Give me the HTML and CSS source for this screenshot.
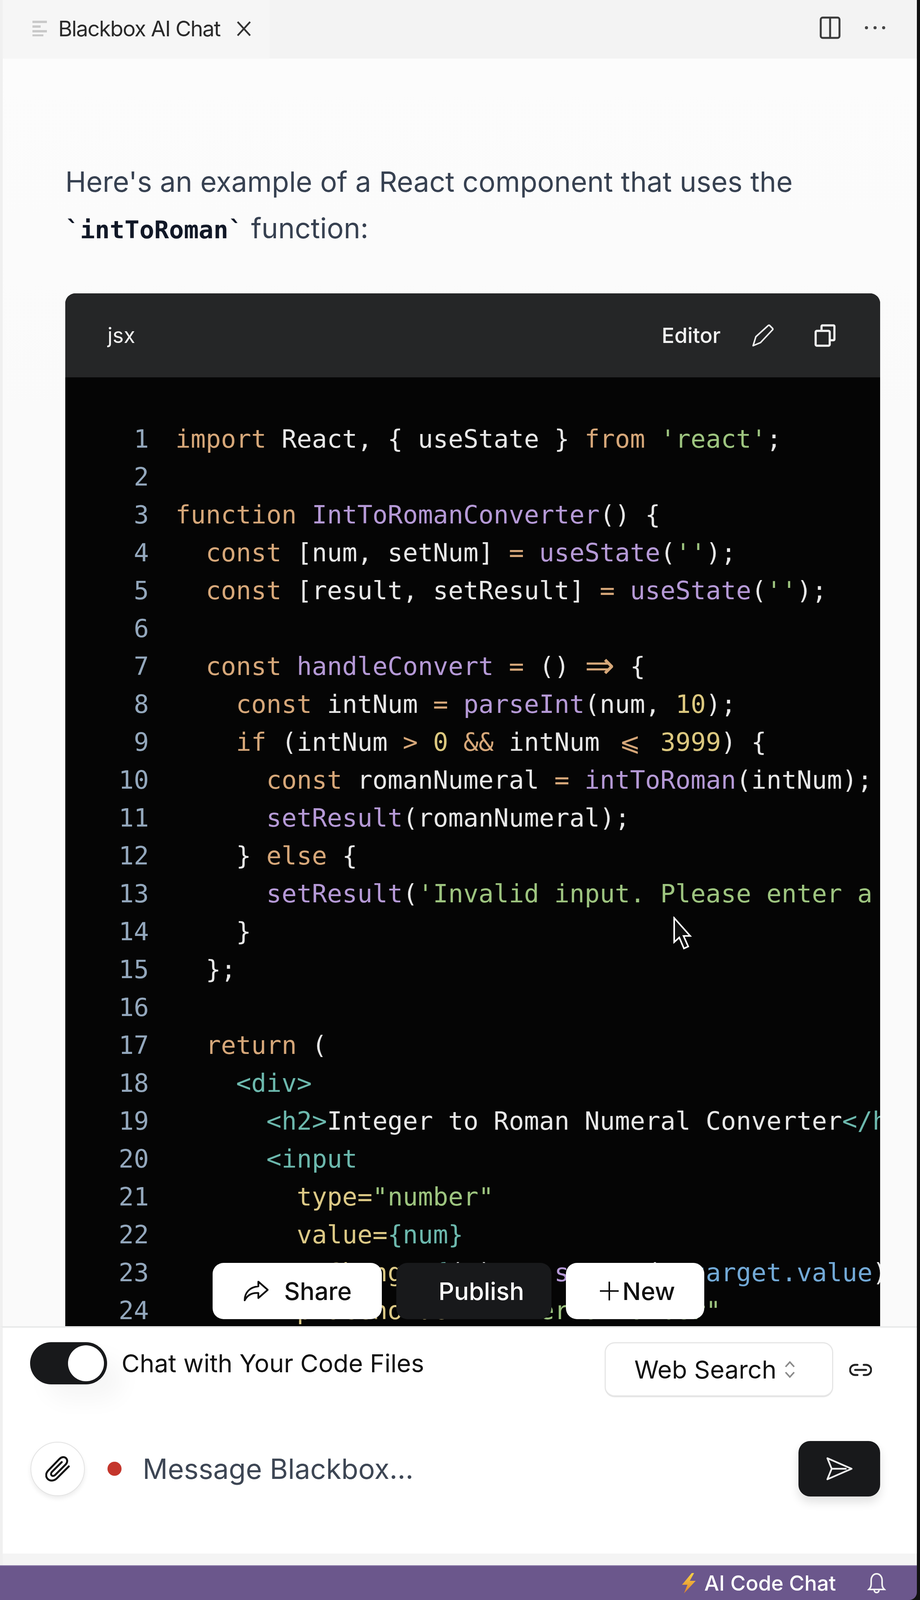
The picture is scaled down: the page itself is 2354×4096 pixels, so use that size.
FILE: index.html
```html
<!DOCTYPE html>
<html lang="en">
<head>
<meta charset="utf-8">
<title>Blackbox AI Chat</title>
<link rel="stylesheet" href="styles.css">
</head>
<body>
<div class="app">
  <header class="tabs">
    <div class="tab">
      <svg class="tab-lines" viewBox="0 0 37 40"><path d="M0 3h37M0 15h21M0 27h37M0 38h28"/></svg>
      <span class="tab-title">Blackbox AI Chat</span>
      <svg class="tab-close" viewBox="0 0 36 39"><path d="M2 2l32 35M34 2L2 37"/></svg>
    </div>
    <div class="tab-actions">
      <svg class="split" viewBox="0 0 54 58"><rect x="3" y="3" width="48" height="52" rx="5"/><path d="M27 3v52"/></svg>
      <svg class="more" viewBox="0 0 54 10"><circle cx="5" cy="5" r="4"/><circle cx="27" cy="5" r="4"/><circle cx="49" cy="5" r="4"/></svg>
    </div>
  </header>

  <main class="content">
    <p class="intro">Here's an example of a React component that uses the<br><code class="inline-code">`intToRoman`</code> function:</p>
    <section class="code-card">
      <div class="code-head">
        <span class="lang">jsx</span>
        <span class="head-actions">
          <span class="editor">Editor</span>
          <svg class="pencil" viewBox="0 0 56 58"><path d="M3 55l7-23L42 3q2-1 3 0l8 8q1 2 0 3L22 47z"/></svg>
          <svg class="copy" viewBox="0 0 54 58"><path d="M18 14V6q0-3 3-3h27q3 0 3 3v32q0 3-3 3h-9"/><rect x="3" y="17" width="36" height="38" rx="3"/></svg>
        </span>
      </div>
      <div class="code-body">
<div class="ln"><i>1</i><b class="k">import</b> React, { useState } <b class="k">from</b> <b class="s">'react'</b>;</div>
<div class="ln"><i>2</i></div>
<div class="ln"><i>3</i><b class="k">function</b> <b class="f">IntToRomanConverter</b>() {</div>
<div class="ln"><i>4</i>  <b class="k">const</b> [num, setNum] <b class="k">=</b> <b class="f">useState</b>(<b class="s">''</b>);</div>
<div class="ln"><i>5</i>  <b class="k">const</b> [result, setResult] <b class="k">=</b> <b class="f">useState</b>(<b class="s">''</b>);</div>
<div class="ln"><i>6</i></div>
<div class="ln"><i>7</i>  <b class="k">const</b> <b class="f">handleConvert</b> <b class="k">=</b> () <b class="k arrow">⇒</b> {</div>
<div class="ln"><i>8</i>    <b class="k">const</b> intNum <b class="k">=</b> <b class="f">parseInt</b>(num, <b class="n">10</b>);</div>
<div class="ln"><i>9</i>    <b class="k">if</b> (intNum <b class="k">&gt;</b> <b class="n">0</b> <b class="k">&amp;&amp;</b> intNum <b class="k lig">⩽</b> <b class="n">3999</b>) {</div>
<div class="ln"><i>10</i>      <b class="k">const</b> romanNumeral <b class="k">=</b> <b class="f">intToRoman</b>(intNum);</div>
<div class="ln"><i>11</i>      <b class="f">setResult</b>(romanNumeral);</div>
<div class="ln"><i>12</i>    } <b class="k">else</b> {</div>
<div class="ln"><i>13</i>      <b class="f">setResult</b>(<b class="s">'Invalid input. Please enter a number between 1 and 3999.'</b>);</div>
<div class="ln"><i>14</i>    }</div>
<div class="ln"><i>15</i>  };</div>
<div class="ln"><i>16</i></div>
<div class="ln"><i>17</i>  <b class="k">return</b> (</div>
<div class="ln"><i>18</i>    <b class="t">&lt;div&gt;</b></div>
<div class="ln"><i>19</i>      <b class="t">&lt;h2&gt;</b>Integer to Roman Numeral Converter<b class="t">&lt;/h2&gt;</b></div>
<div class="ln"><i>20</i>      <b class="t">&lt;input</b></div>
<div class="ln"><i>21</i>        <b class="a">type=</b><b class="s">"number"</b></div>
<div class="ln"><i>22</i>        <b class="a">value=</b><b class="t">{num}</b></div>
<div class="ln"><i>23</i>        <b class="a">onChange=</b><b class="t">{</b>(e) <b class="k arrow">⇒</b> <b class="f">setNum</b>(<b class="u">e.target.value</b>)<b class="t">}</b></div>
<div class="ln"><i>24</i>        <b class="a">placeholder=</b><b class="s">"Enter a number"</b></div>
      </div>
    </section>
    <svg class="cursor" viewBox="0 0 52 86"><path d="M4 4v62l13-12 12 28 11-5-12-27h17z"/></svg>
    <div class="float-actions">
      <button class="pill light share">
        <svg viewBox="0 0 64 52"><path d="M38 2l24 21-24 21V31C22 30 10 36 3 50c0-20 13-34 35-36z"/></svg>
        Share
      </button>
      <button class="pill dark">Publish</button>
      <button class="pill light new">
        <svg viewBox="0 0 48 48"><path d="M24 0v48M0 24h48"/></svg>
        New
      </button>
    </div>
  </main>

  <footer class="composer">
    <div class="composer-top">
      <div class="toggle-row">
        <span class="toggle"><span class="knob"></span></span>
        <span class="toggle-label">Chat with Your Code Files</span>
      </div>
      <div class="search-row">
        <div class="select">
          <span>Web Search</span>
          <svg class="updown" viewBox="0 0 28 44"><path d="M3 15L14 3l11 12M3 29l11 12 11-12"/></svg>
        </div>
        <svg class="link" viewBox="0 0 58 32"><path d="M21 3H15a13 13 0 0 0 0 26h6M37 3h6a13 13 0 0 1 0 26h-6M15 16h28"/></svg>
      </div>
    </div>
    <div class="composer-input">
      <button class="attach">
        <svg viewBox="0 0 64 66"><path d="M60 27L30 57c-8 8-18 8-24 2s-5-15 2-22L36 8c6-6 13-6 17-2s4 11-1 16L25 49c-3 3-7 3-9 1s-2-6 1-9L42 16"/></svg>
      </button>
      <span class="rec"></span>
      <span class="placeholder">Message Blackbox...</span>
      <button class="send">
        <svg viewBox="0 0 68 60"><path d="M3 3l62 27L3 57l11-27zM14 30h38"/></svg>
      </button>
    </div>
  </footer>
  <div class="band"></div>
  <div class="status">
    <svg class="bolt" viewBox="0 0 40 52">
      <defs><linearGradient id="boltFill" x1="0" y1="0" x2="0" y2="1"><stop offset="0" stop-color="#f7d247"/><stop offset="1" stop-color="#e0812a"/></linearGradient></defs>
      <path d="M28 0L3 30h14L8 52l30-32H23l11-20z"/>
    </svg>
    <span class="status-text">AI Code Chat</span>
    <svg class="bell" viewBox="0 0 48 54"><path d="M4 43c4-4 6-7 6-14v-9C10 10 16 3 24 3s14 7 14 17v9c0 7 2 10 6 14zM18 45a6 6 0 0 0 12 0"/></svg>
  </div>
</div>
</body>
</html>
```
FILE: styles.css
```css
* { box-sizing: border-box; }
html, body { margin: 0; padding: 0; width: 2354px; height: 4096px; overflow: hidden; background: #1a1a1a; }
body { font-family: Inter, "Noto Sans", sans-serif; color: #111; }
.app { width: 2354px; height: 4096px; padding-right: 8px; display: flex; flex-direction: column; position: relative; overflow: hidden; background: linear-gradient(to bottom, transparent 60%, #111 88%), linear-gradient(to right, #b0b0b0, #4a4a4a 55%, #111); }

.tabs { height: 150px; flex: none; display: flex; justify-content: space-between; background: #f3f3f3; border-left: 7px solid #f0f0f0; }
.tab { width: 683px; display: flex; align-items: center; background: #f6f6f6; padding: 0 0 4px 76px; }
.tab-lines { width: 37px; height: 40px; fill: none; stroke: #c9c9c9; stroke-width: 6; }
.tab-title { margin-left: 29px; font-size: 55px; letter-spacing: -1.75px; color: #2a2a2a; white-space: nowrap; width: 457px; }
.tab-close { width: 36px; height: 39px; fill: none; stroke: #333; stroke-width: 4.5; }
.tab-actions { display: flex; align-items: center; gap: 61px; padding: 0 80px 8px 0; }
.split { width: 54px; height: 58px; fill: none; stroke: #3a3a3a; stroke-width: 5; }
.more { width: 54px; height: 10px; fill: #444; }

.content { flex: 1; min-height: 0; padding: 255px 94px 0 160px; position: relative; overflow: hidden; border-left: 7px solid #f0f0f0; background: linear-gradient(#fcfcfc, #fafafa 30%); }
.intro { margin: 0 0 103px; font-size: 72px; line-height: 119px; color: #374151; white-space: nowrap; }
.inline-code { font-family: "DejaVu Sans Mono", "Liberation Mono", monospace; font-size: 63px; font-weight: 700; color: #111827; }

.code-card { background: #050505; border-radius: 26px 26px 0 0; overflow: hidden; }
.code-head { height: 215px; background: #252627; display: flex; align-items: center; justify-content: space-between; padding: 0 114px 0 108px; color: #f2f2f2; }
.lang { font-size: 54px; }
.head-actions { display: flex; align-items: center; }
.editor { font-size: 54px; font-weight: 500; }
.pencil { width: 56px; height: 58px; margin-left: 80px; fill: none; stroke: #eee; stroke-width: 4; stroke-linejoin: round; }
.copy { width: 54px; height: 58px; margin-left: 104px; fill: none; stroke: #f2f2f2; stroke-width: 5.5; }
.code-body { padding-top: 109px; font-family: "DejaVu Sans Mono", "Liberation Mono", monospace; font-size: 64.4px; line-height: 97px; color: #e8e8e8; }
.ln { white-space: pre; height: 97px; }
.ln i { display: inline-block; width: 214px; margin-right: 68px; text-align: right; font-style: normal; color: #93a7bc; }
.ln b { font-weight: 400; }
.k { color: #d6a779; }
.f { color: #b599d6; }
.s { color: #9dc47f; }
.n { color: #dcc87f; }
.t { color: #6cb8ad; }
.a { color: #dcc986; }
.u { color: #72a9d6; }
.lig { display: inline-block; width: 2ch; text-align: center; }
.ln .arrow { display: inline-block; width: 77.6px; text-align: center; font-family: "DejaVu Sans", sans-serif; font-size: 92px; line-height: 0; vertical-align: -7px; }

.cursor { position: absolute; left: 1714px; top: 2196px; width: 52px; height: 86px; fill: #111; stroke: #fff; stroke-width: 4; stroke-linejoin: miter; }
.float-actions { position: absolute; left: 537px; top: 3083px; display: flex; gap: 37px; }
.pill { height: 144px; border: 0; border-radius: 28px; display: flex; align-items: center; justify-content: center; font-family: inherit; font-size: 62.5px; font-weight: 500; padding: 0; }
.light { background: #fff; color: #111; box-shadow: 0 2px 4px rgba(0,0,0,.25); }
.dark { background: #18191b; color: #fff; width: 397px; padding-left: 38px; }
.share { width: 433px; gap: 40px; padding-left: 2px; }
.share svg { width: 64px; height: 52px; fill: none; stroke: #111; stroke-width: 4.5; stroke-linejoin: round; }
.new { width: 354px; gap: 10px; padding-left: 12px; }
.new svg { width: 48px; height: 48px; fill: none; stroke: #111; stroke-width: 4; }

.composer { height: 582px; flex: none; background: #fff; border-top: 4px solid #e9eaea; border-left: 7px solid #f0f0f0; display: flex; flex-direction: column; }
.composer-top { display: flex; justify-content: space-between; padding: 37px 115px 0 70px; height: 290px; }
.toggle-row { display: flex; align-items: flex-start; gap: 37px; }
.toggle { width: 197px; height: 108px; border-radius: 54px; background: #18191b; padding: 8px; display: flex; justify-content: flex-end; box-shadow: 40px 40px 60px rgba(0,0,0,.04); flex: none; }
.knob { width: 92px; height: 92px; border-radius: 50%; background: #fff; }
.toggle-label { font-size: 63.5px; line-height: 108px; color: #111; white-space: nowrap; }
.search-row { display: flex; align-items: flex-start; gap: 41px; }
.select { width: 585px; height: 141px; border: 3px solid #e6e6e6; border-bottom-width: 5px; border-radius: 26px; background: #fff; display: flex; align-items: center; padding-left: 73px; gap: 20px; font-size: 63.5px; color: #111; white-space: nowrap; }
.updown { width: 28px; height: 44px; fill: none; stroke: #8a8a8a; stroke-width: 4; }
.link { width: 58px; height: 32px; margin-top: 55px; fill: none; stroke: #222; stroke-width: 5; stroke-linecap: round; }
.composer-input { display: flex; align-items: center; padding: 0 94px 0 71px; }
.attach { width: 139px; height: 139px; border-radius: 50%; background: #fff; border: 2px solid #e3e3e3; box-shadow: 0 6px 12px rgba(0,0,0,.08); display: flex; align-items: center; justify-content: center; padding: 0; flex: none; }
.attach svg { width: 64px; height: 66px; fill: none; stroke: #111; stroke-width: 5; stroke-linecap: round; }
.rec { width: 36px; height: 36px; border-radius: 50%; background: #c4362c; margin-left: 58px; flex: none; }
.placeholder { margin-left: 54px; font-size: 71px; color: #3d4654; flex: 1; white-space: nowrap; }
.send { width: 209px; height: 142px; border: 0; border-radius: 30px; background: #18191b; box-shadow: 0 14px 24px rgba(0,0,0,.12); display: flex; align-items: center; justify-content: center; padding: 0; flex: none; }
.send svg { width: 68px; height: 60px; fill: none; stroke: #eee; stroke-width: 4.5; stroke-linejoin: round; }
.band { height: 30px; flex: none; background: #f4f4f4; border-left: 7px solid #f0f0f0; }
.status { height: 89px; flex: none; background: #6b578c; color: #fff; display: flex; align-items: center; justify-content: flex-end; padding-right: 79px; border-top: 2px solid #8a7aa8; border-bottom-right-radius: 20px; }
.bolt { width: 40px; height: 52px; margin-right: 20px; fill: url(#boltFill); }
.status-text { font-size: 53.5px; font-weight: 500; }
.bell { width: 48px; height: 54px; margin-left: 80px; fill: none; stroke: #f2f2f2; stroke-width: 4; }
```
